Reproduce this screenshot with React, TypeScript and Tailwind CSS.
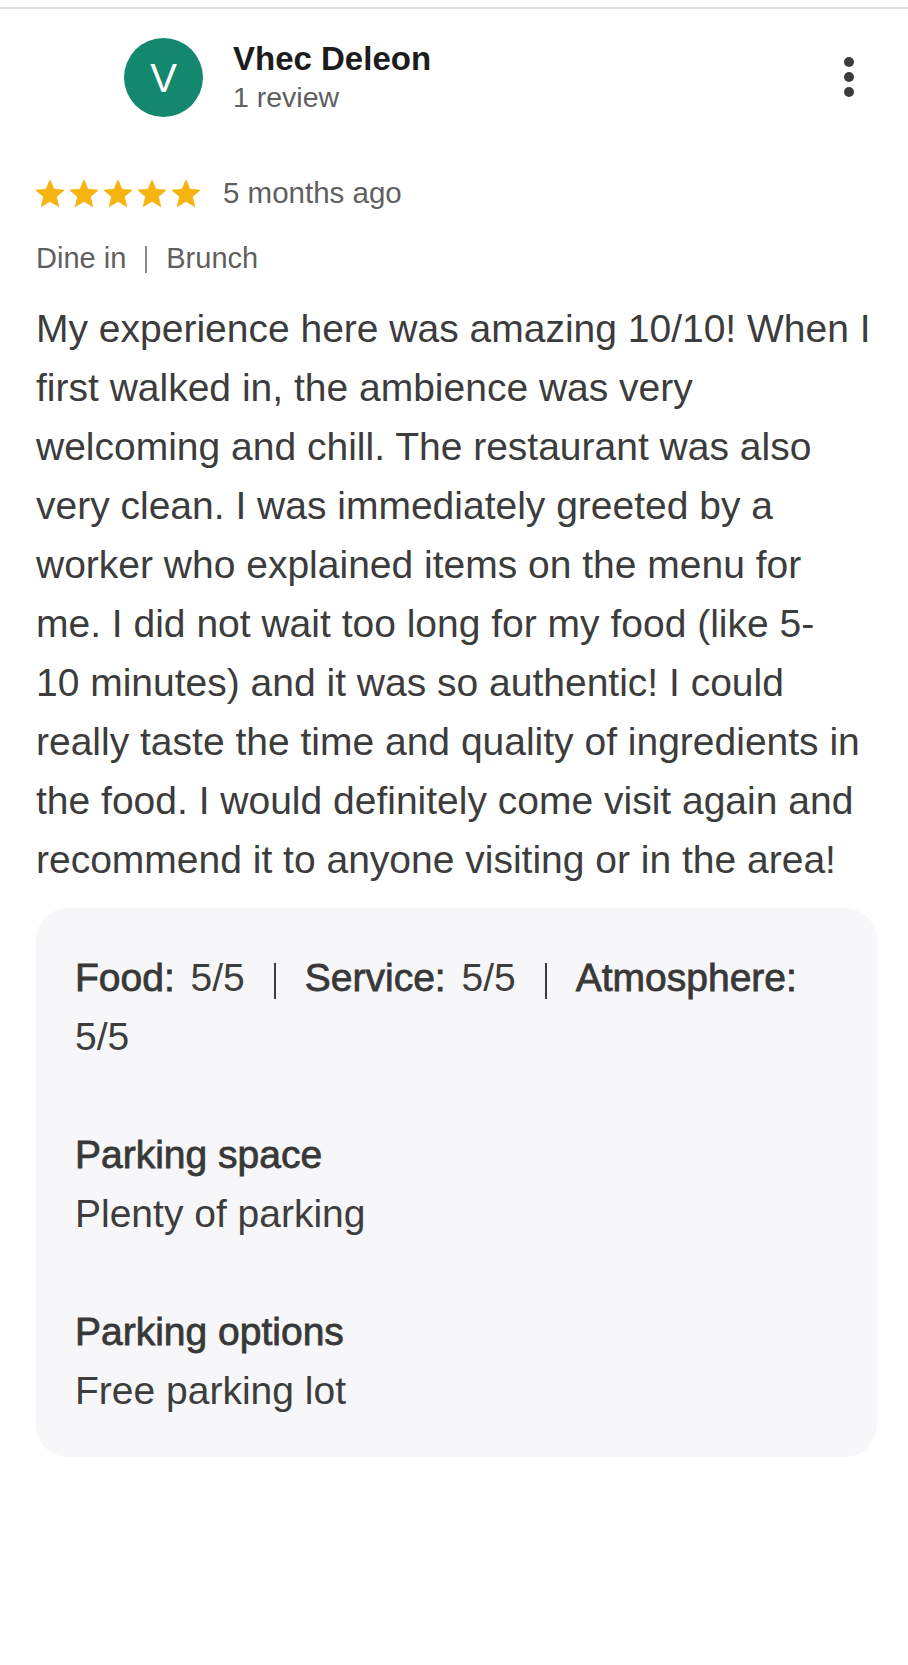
import React from 'react'

const stars = [0, 1, 2, 3, 4]

function Star() {
  return (
    <svg viewBox="2 2 20 19.3" className="w-[28px] h-[27px]" aria-hidden="true">
      <path
        d="M12 17.27L18.18 21l-1.64-7.03L22 9.24l-7.19-.61L12 2 9.19 8.63 2 9.24l5.46 4.73L5.82 21z"
        fill="#f6b40e"
        stroke="#f6b40e"
        strokeWidth="0.6"
        strokeLinejoin="round"
      />
    </svg>
  )
}

function Pipe({ className }: { className: string }) {
  return <span className={`inline-block align-middle ${className}`} />
}

// medium-weight look: regular widths with a light stroke
const label = 'text-[#383838] [-webkit-text-stroke:0.8px_#383838]'

export default function App() {
  return (
    <div className="min-h-screen bg-white font-['Liberation_Sans',Arial,sans-serif]">
      {/* top divider */}
      <div className="pt-[7px]">
        <div className="h-[2px] bg-[#dedede]" />
      </div>

      <div className="pl-[36px] pr-[31px]">
        {/* Reviewer header */}
        <div className="flex items-start pt-[29px]">
          <div className="ml-[88px] w-[79px] h-[79px] rounded-full bg-[#13886f] flex items-center justify-center text-white text-[40px] leading-none">
            V
          </div>
          <div className="ml-[30px] mt-[2px]">
            <p className="text-[33px] leading-[38px] font-bold text-[#1c1c1c]">Vhec Deleon</p>
            <p className="text-[28.5px] leading-[38px] text-[#5f5f5f]">1 review</p>
          </div>
          <button className="ml-auto mr-[23px] mt-[19px] flex flex-col gap-[5px]" aria-label="More">
            <span className="w-[10px] h-[10px] rounded-full bg-[#3c3c3c]" />
            <span className="w-[10px] h-[10px] rounded-full bg-[#3c3c3c]" />
            <span className="w-[10px] h-[10px] rounded-full bg-[#3c3c3c]" />
          </button>
        </div>

        {/* Rating + time */}
        <div className="flex items-center h-[36px] mt-[58px]">
          <div className="flex gap-[6px]">
            {stars.map((s) => (
              <Star key={s} />
            ))}
          </div>
          <span className="ml-[23px] text-[29.5px] text-[#5f5f5f]">5 months ago</span>
        </div>

        {/* Tags */}
        <div className="flex items-center h-[36px] mt-[30px] text-[29px] text-[#5f5f5f]">
          <span>Dine in</span>
          <Pipe className="w-[2px] h-[27px] mx-[19px] bg-[#8a8a8a]" />
          <span>Brunch</span>
        </div>

        {/* Review text */}
        <p className="mt-[22px] text-[39px] leading-[59px] text-[#3c3c3c]">
          My experience here was amazing 10/10! When I first walked in, the ambience was very
          welcoming and chill. The restaurant was also very clean. I was immediately greeted by a
          worker who explained items on the menu for me. I did not wait too long for my food (like
          5-
          <br />
          10 minutes) and it was so authentic! I could really taste the time and quality of
          ingredients in the food. I would definitely come visit again and recommend it to anyone
          visiting or in the area!
        </p>

        {/* Details card */}
        <div className="mt-[19px] rounded-[32px] bg-[#f7f7f9] pl-[39px] pr-[39px] pt-[40px] pb-[37px] text-[39px] leading-[59px] text-[#3d3d3d]">
          <p>
            <span className={`${label} mr-[5px]`}>Food:</span> 5/5
            <Pipe className="w-[2px] h-[36px] mx-[29px] bg-[#3d3d3d]" />
            <span className={`${label} mr-[5px]`}>Service:</span> 5/5
            <Pipe className="w-[2px] h-[36px] mx-[29px] bg-[#3d3d3d]" />
            <span className={`${label} mr-[5px]`}>Atmosphere:</span> 5/5
          </p>

          <div className="mt-[59px]">
            <p className={label}>Parking space</p>
            <p>Plenty of parking</p>
          </div>

          <div className="mt-[59px]">
            <p className={label}>Parking options</p>
            <p>Free parking lot</p>
          </div>
        </div>
      </div>
    </div>
  )
}
